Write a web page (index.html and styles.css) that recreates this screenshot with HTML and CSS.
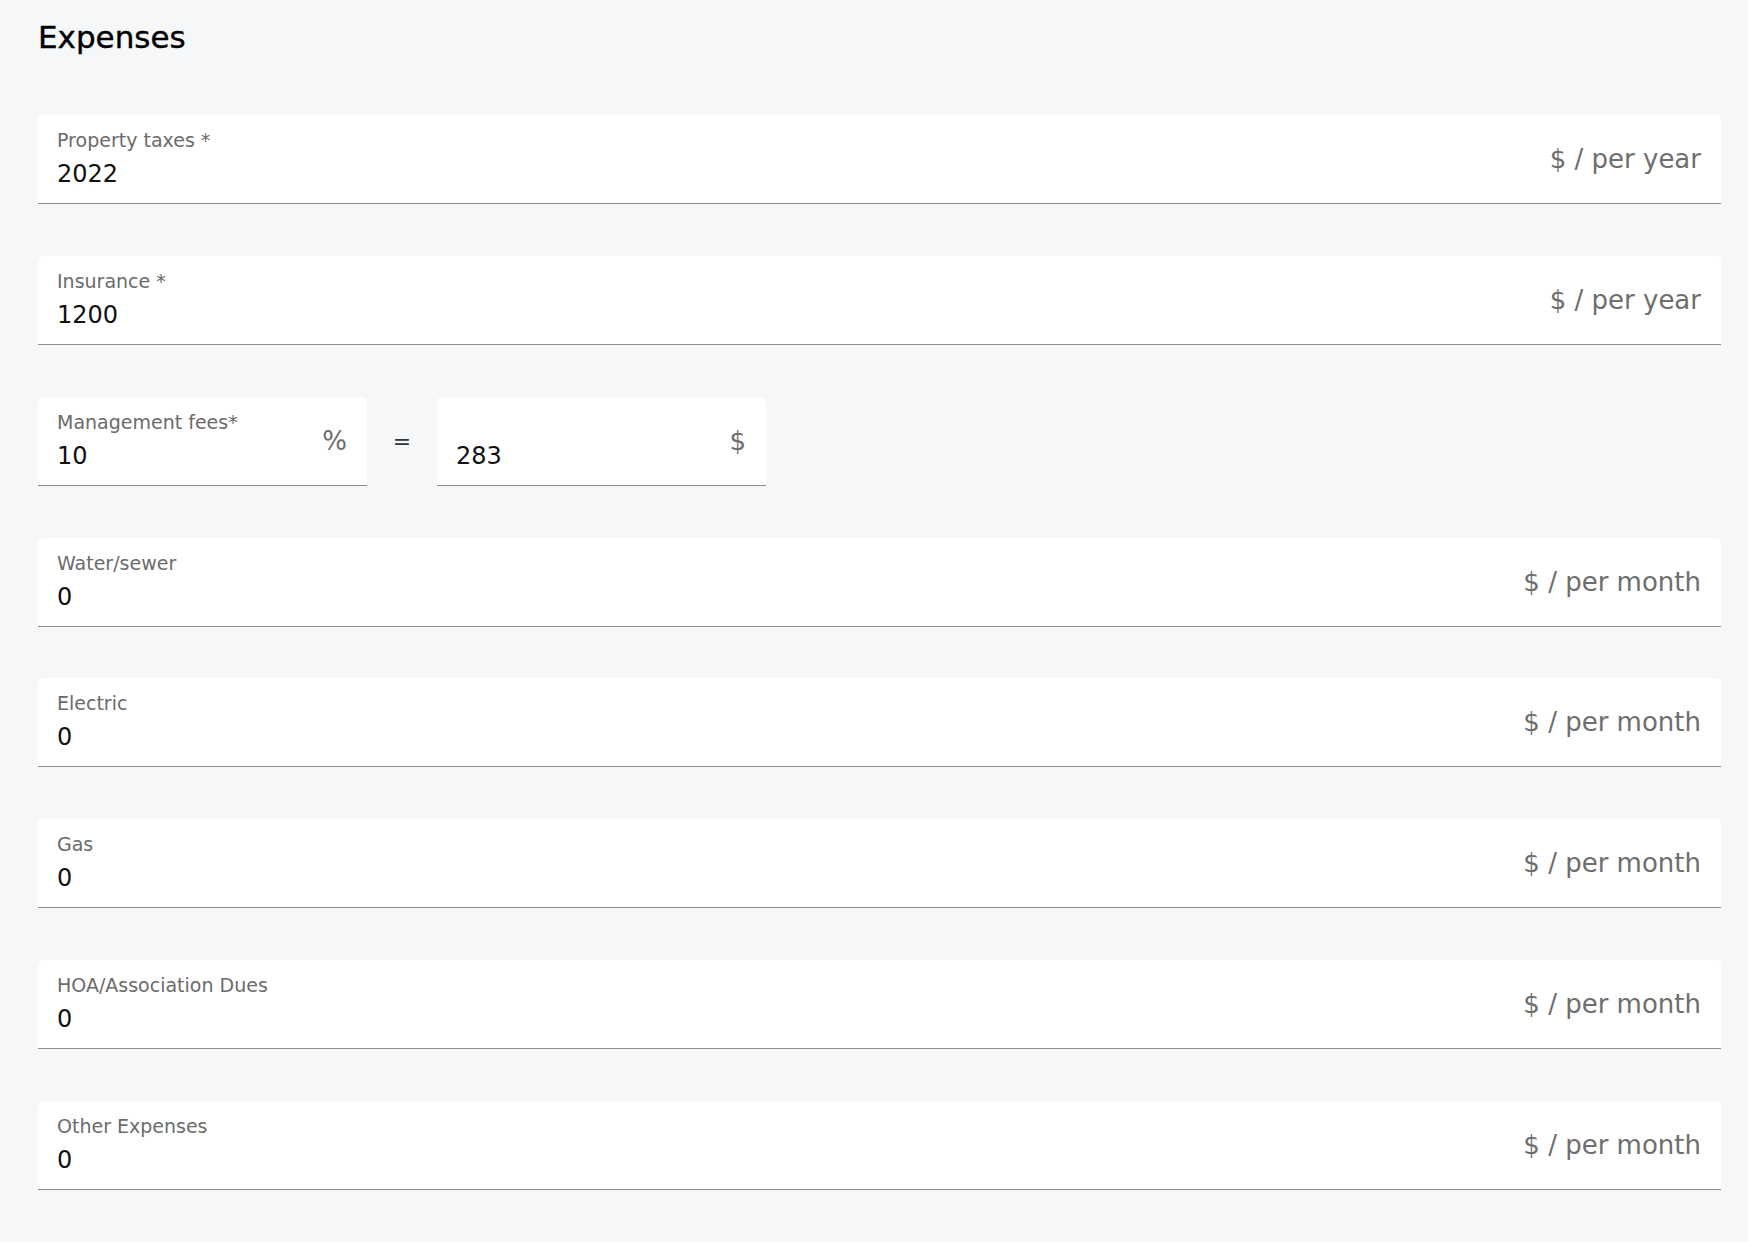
FILE: index.html
```html
<!DOCTYPE html>
<html lang="en">
<head>
    <meta charset="UTF-8">
    <title>Expenses</title>
    <link rel="stylesheet" href="styles.css">
</head>
<body>
    <div class="page">
        <h2 class="section-title">Expenses</h2>

        <div class="field-list">

            <!-- property taxes -->
            <div class="field">
                <div class="field-main">
                    <label class="field-label">Property taxes *</label>
                    <div class="field-value">2022</div>
                </div>
                <span class="field-suffix">$ / per year</span>
            </div>

            <div class="field">
                <div class="field-main">
                    <label class="field-label">Insurance *</label>
                    <div class="field-value">1200</div>
                </div>
                <span class="field-suffix">$ / per year</span>
            </div>

            <!-- management fees: percent = dollars -->
            <div class="fee-row">
                <div class="field field-small">
                    <div class="field-main">
                        <label class="field-label">Management fees*</label>
                        <div class="field-value">10</div>
                    </div>
                    <span class="field-suffix">%</span>
                </div>
                <span class="equals">=</span>
                <div class="field field-small">
                    <div class="field-main">
                        <label class="field-label">&nbsp;</label>
                        <div class="field-value">283</div>
                    </div>
                    <span class="field-suffix">$</span>
                </div>
            </div>

            <div class="field">
                <div class="field-main">
                    <label class="field-label">Water/sewer</label>
                    <div class="field-value">0</div>
                </div>
                <span class="field-suffix">$ / per month</span>
            </div>

            <div class="field">
                <div class="field-main">
                    <label class="field-label">Electric</label>
                    <div class="field-value">0</div>
                </div>
                <span class="field-suffix">$ / per month</span>
            </div>

            <div class="field">
                <div class="field-main">
                    <label class="field-label">Gas</label>
                    <div class="field-value">0</div>
                </div>
                <span class="field-suffix">$ / per month</span>
            </div>

            <div class="field">
                <div class="field-main">
                    <label class="field-label">HOA/Association Dues</label>
                    <div class="field-value">0</div>
                </div>
                <span class="field-suffix">$ / per month</span>
            </div>

            <div class="field">
                <div class="field-main">
                    <label class="field-label">Other Expenses</label>
                    <div class="field-value">0</div>
                </div>
                <span class="field-suffix">$ / per month</span>
            </div>

            <div class="divider"></div>
        </div>
    </div>
</body>
</html>
```

FILE: styles.css
```css
:root {
    --bg: #f6f7f9;
    --label: #6b6b6b;
    --suffix: #6e6e6e;
    --line: #8e8e8e;
}

body {
    margin: 0;
    background: var(--bg);
    font-family: 'DejaVu Sans', sans-serif;
    color: #111;
}

.page {
    padding: 18px 27px 0 38px;
}

.section-title {
    margin: 0 0 59px;
    font-size: 31px;
    line-height: 38px;
    font-weight: 500;
    color: #000;
    -webkit-text-stroke: 0.4px #000;
}

.field-list {
    display: flex;
    flex-direction: column;
    gap: 51.85px;
}

.field {
    display: flex;
    align-items: center;
    height: 89px;
    box-sizing: border-box;
    padding: 0 20px 0 19px;
    background: white;
    border-bottom: 1px solid var(--line);
    border-radius: 5px 5px 0 0;
}

.field-main {
    flex: 1;
    display: flex;
    flex-direction: column;
    align-self: stretch;
    padding-top: 14px;
}

.field-label {
    font-size: 19px;
    line-height: 22px;
    color: var(--label);
}

.field-value {
    margin-top: 8px;
    font-size: 24px;
    line-height: 30px;
    color: #111;
}

.field-suffix {
    font-size: 26px;
    color: var(--suffix);
    white-space: nowrap;
}

.fee-row {
    display: flex;
    align-items: center;
}

.field-small {
    width: 329px;
}

.equals {
    width: 70px;
    text-align: center;
    font-size: 22px;
    color: #333;
}

.divider {
    height: 20px;
    border-top: 1px solid #d3d5d8;
}
```
